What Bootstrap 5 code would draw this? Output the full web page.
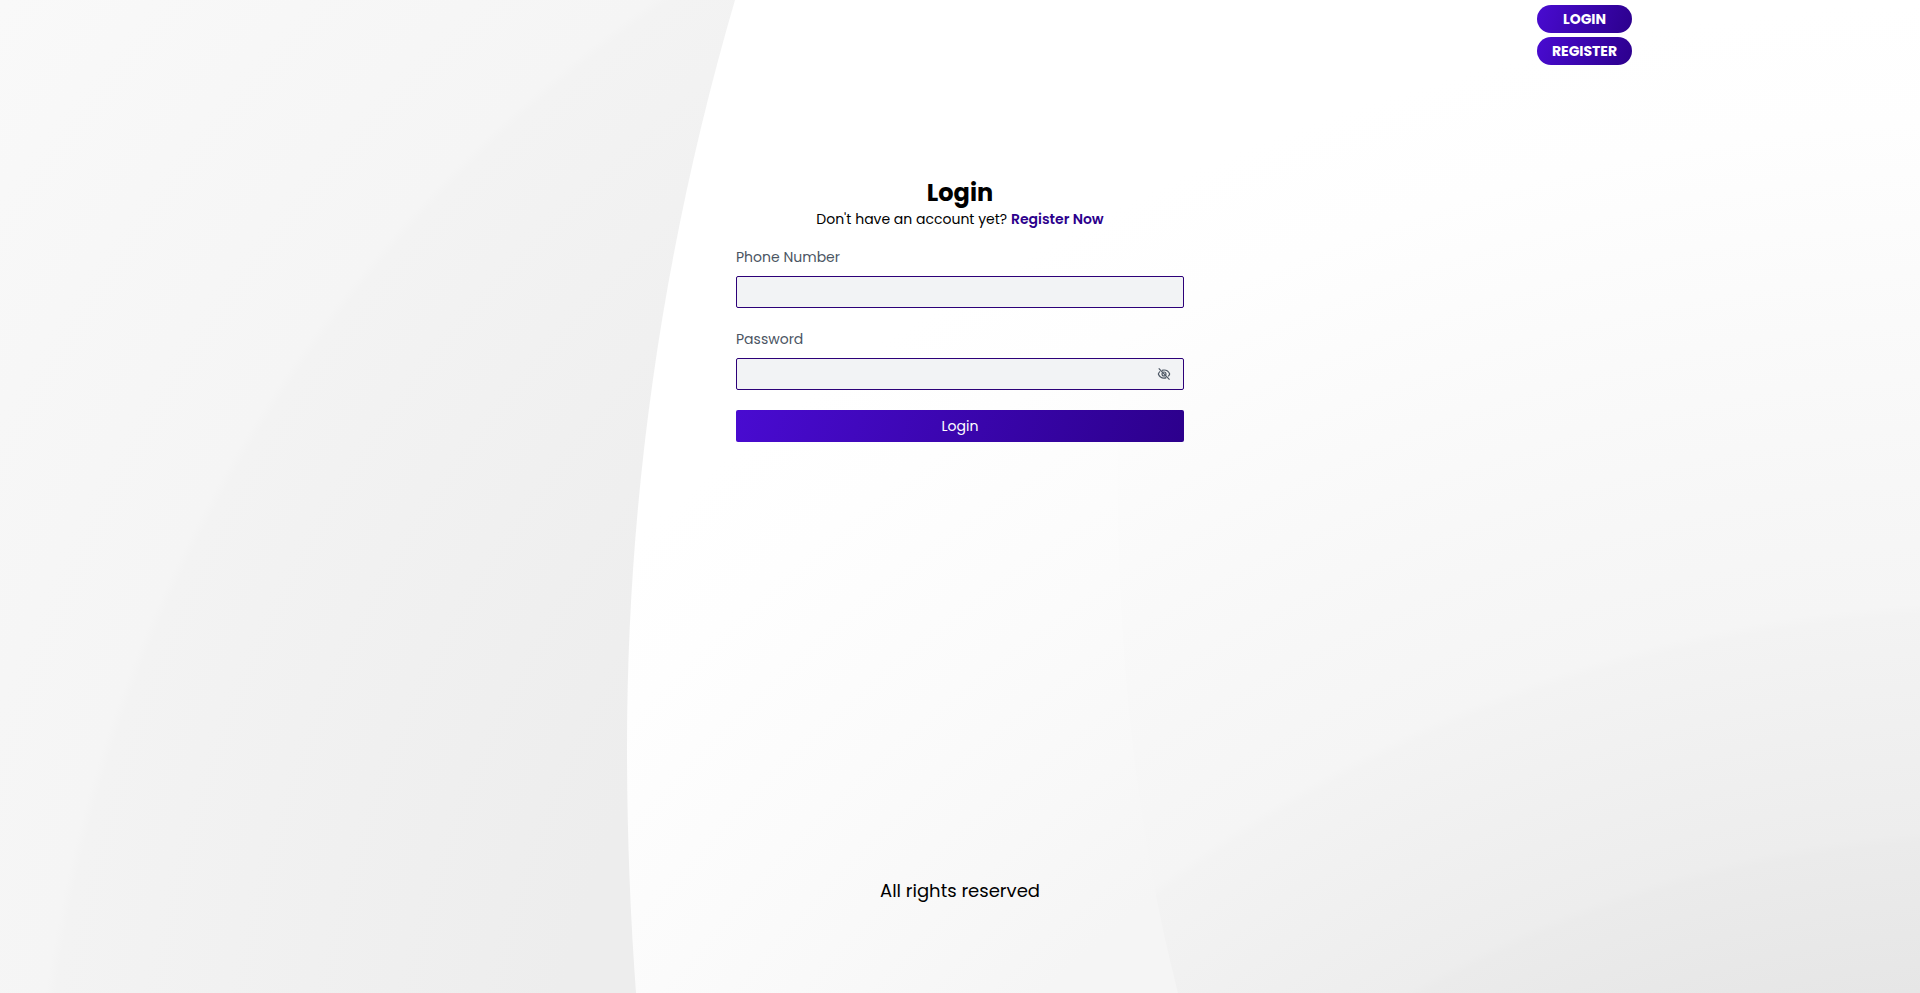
<!DOCTYPE html>
<html lang="en">
<head>
<meta charset="utf-8">
<meta name="viewport" content="width=device-width, initial-scale=1">
<title>Login</title>
<link href="https://cdn.jsdelivr.net/npm/bootstrap@5.3.0/dist/css/bootstrap.min.css" rel="stylesheet">
<style>
  body { font-family: Poppins, Inter, sans-serif; font-size: 14px; line-height: 20px; color: #000; background: #fff; }
  .backdrop { z-index: -1; }
  .page-width { width: 70%; }
  .site-header { padding-top: 5px; }
  .site-main { padding-top: 112px; }
  .brand-fill { background: linear-gradient(110deg, #490bd1, #2c008c); color: #fff; border: 0; }
  .brand-fill:hover { color: #fff; }
  .nav-pill { width: 95px; height: 28px; padding: 4px 0; font-size: 14px; line-height: 20px; font-weight: 700; }
  .login-form { max-width: 448px; }
  .page-title { font-size: 24px; line-height: 32px; }
  .brand-link { color: #2c008c; }
  .field-group { margin-top: 18px; margin-bottom: 20px; }
  .field-label { color: #4b5563; line-height: 20px; margin-bottom: 9px; font-size: 14px; }
  .field-box, .field-box:focus { height: 32px; background: #f2f3f5; border: 1px solid #2c0078; border-radius: 2px; }
  .field-group + .field-group { margin-top: 21px; }
  .submit-btn { height: 32px; padding: 6px; font-size: 14px; line-height: 20px; border-radius: 2px; }
  .eye-btn { right: 13px; color: #4b5563; }
  .site-footer { font-size: 18px; line-height: 28px; padding-bottom: 88px; }
</style>
</head>
<body class="d-flex flex-column min-vh-100 position-relative">
<svg class="backdrop position-absolute top-0 start-0 w-100 h-100" viewBox="0 0 1920 993" preserveAspectRatio="none" aria-hidden="true">
  <defs>
    <radialGradient id="shade" gradientUnits="userSpaceOnUse" cx="1500" cy="1200" r="1920">
      <stop offset=".5" stop-color="#ededed"/><stop offset=".76" stop-color="#f3f3f3"/><stop offset=".765" stop-color="#f5f5f5"/><stop offset="1" stop-color="#f9f9f9"/>
    </radialGradient>
    <radialGradient id="sheet" gradientUnits="userSpaceOnUse" cx="2000" cy="2000" r="2000">
      <stop offset=".694" stop-color="#f5f5f5"/><stop offset=".76" stop-color="#f8f8f8"/><stop offset=".84" stop-color="#fbfbfb"/><stop offset=".94" stop-color="#fefefe"/><stop offset="1" stop-color="#fff"/>
    </radialGradient>
    <radialGradient id="sheet-deep" gradientUnits="userSpaceOnUse" cx="2000" cy="2000" r="2000">
      <stop offset=".505" stop-color="#e6e6e6"/><stop offset=".58" stop-color="#ebebeb"/><stop offset=".585" stop-color="#ededed"/><stop offset=".694" stop-color="#f3f3f3"/><stop offset=".699" stop-color="#f5f5f5"/><stop offset=".76" stop-color="#f7f7f7"/><stop offset=".84" stop-color="#fafafa"/><stop offset=".94" stop-color="#fefefe"/><stop offset="1" stop-color="#fff"/>
    </radialGradient>
  </defs>
  <rect width="1920" height="993" fill="url(#shade)"/>
  <path d="M735 0C662 250 627 500 627 747C627 830 630 912 636 993H1920V0Z" fill="url(#sheet)"/>
  <path d="M1150 0C1105 350 1100 690 1178 993H1920V0Z" fill="url(#sheet-deep)"/>
</svg>

<header class="site-header page-width mx-auto d-flex flex-column align-items-end gap-1">
  <a href="#login" class="btn nav-pill brand-fill rounded-pill">LOGIN</a>
  <a href="#register" class="btn nav-pill brand-fill rounded-pill">REGISTER</a>
</header>

<main class="site-main flex-grow-1 d-flex flex-column align-items-center">
  <form class="login-form w-100" id="login">
    <div class="text-center">
      <h1 class="page-title fw-bold mb-0">Login</h1>
      <p class="mb-0">Don't have an account yet? <a href="#register" class="brand-link fw-semibold text-decoration-none">Register Now</a></p>
    </div>
    <div class="field-group">
      <label for="phone" class="field-label d-block">Phone Number</label>
      <input type="tel" id="phone" class="form-control field-box shadow-none">
    </div>
    <div class="field-group">
      <label for="password" class="field-label d-block">Password</label>
      <div class="position-relative d-flex align-items-center">
        <input type="password" id="password" class="form-control field-box shadow-none">
        <button type="button" class="eye-btn btn p-0 border-0 position-absolute d-flex" aria-label="Show password">
          <svg width="14" height="14" viewBox="0 0 24 24" fill="none" stroke="currentColor" stroke-width="2" aria-hidden="true">
            <path d="M3 2.500L21.500 21.500"/>
            <path d="M8.500 5.800C9.600 5.400 10.800 5.200 12 5.200C16.600 5.200 20.200 8 21.700 12C21.100 13.600 20.300 14.900 19.200 16M16 18.200C14.800 18.700 13.400 19 12 19C7.400 19 3.800 16 2.300 12C3 10.200 4 8.700 5.400 7.500"/>
            <circle cx="12" cy="12" r="3.400"/>
          </svg>
        </button>
      </div>
    </div>
    <button type="submit" class="btn submit-btn brand-fill w-100">Login</button>
  </form>
</main>

<footer class="site-footer text-center">All rights reserved</footer>
<script src="https://cdn.jsdelivr.net/npm/bootstrap@5.3.0/dist/js/bootstrap.bundle.min.js"></script>
</body>
</html>
